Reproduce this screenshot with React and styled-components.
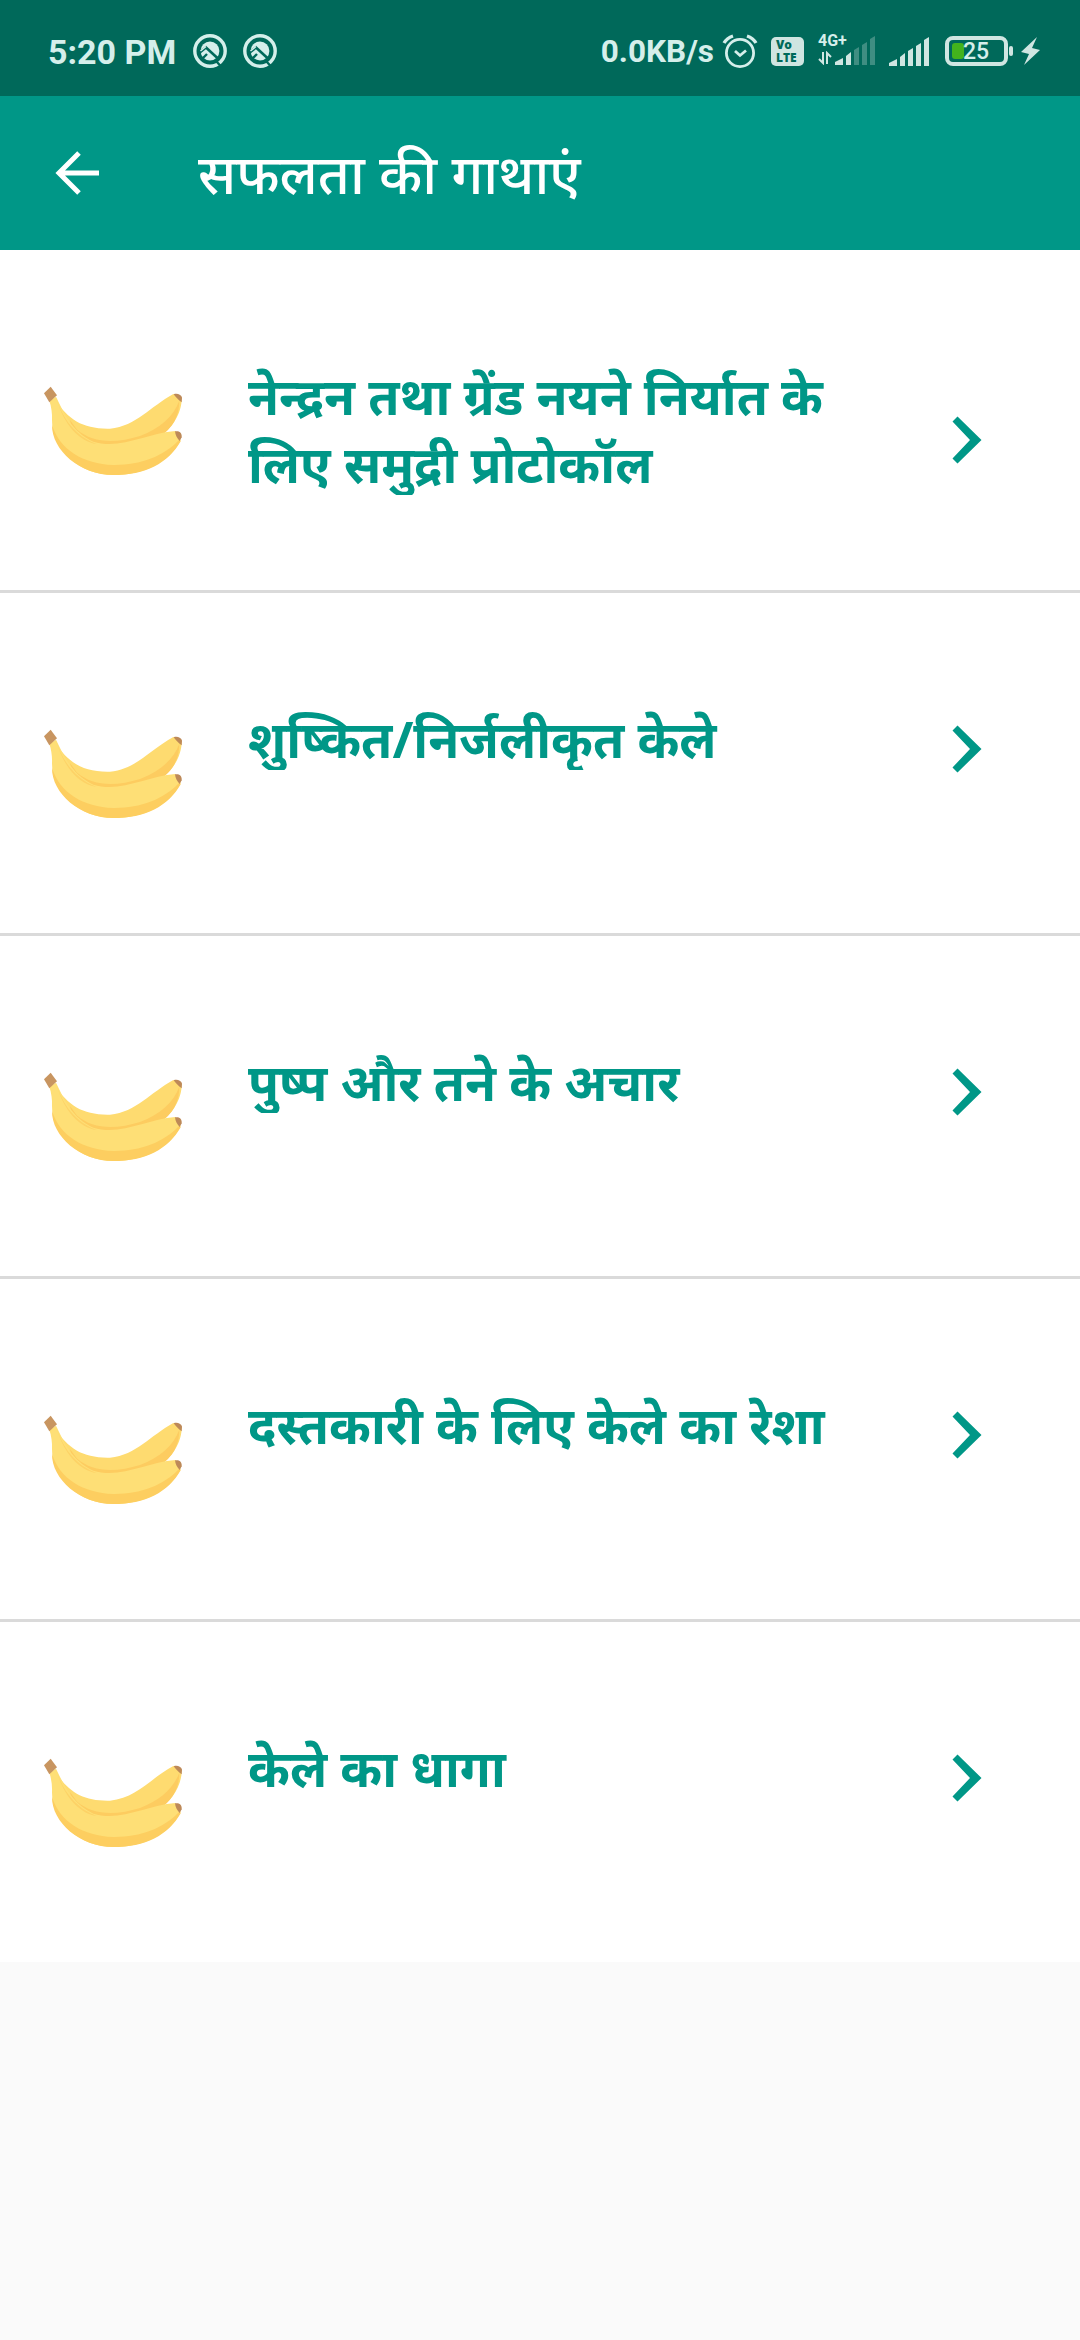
import styled, { createGlobalStyle } from "styled-components";

const GlobalStyle = createGlobalStyle`
  * {
    box-sizing: border-box;
  }

  body {
    margin: 0;
    background: #fafafa;
    font-family: "Noto Sans", "Noto Sans Devanagari", sans-serif;
  }
`;

const Screen = styled.div`
  width: 1080px;
  min-height: 2340px;
  display: flex;
  flex-direction: column;
  background: #fafafa;
`;

// Android status bar
const StatusBar = styled.div`
  height: 96px;
  padding: 6px 40px 0 48px;
  display: flex;
  align-items: center;
  background: #00695a;
  color: #d5efeb;
  font-family: Roboto, sans-serif;
  font-weight: 700;
`;

const StatusText = styled.span`
  padding-top: 2px;
  font-size: ${(props) => props.$size}px;
  line-height: 40px;
  white-space: nowrap;
`;

const StatusIcon = styled.svg`
  display: block;
  flex: none;
  margin-left: ${(props) => props.$gap}px;
`;

const Spacer = styled.div`
  flex: 1;
`;

const VoLte = styled.div`
  width: 33px;
  height: 29px;
  margin-left: 13px;
  padding: 1px 0 0 5px;
  display: flex;
  flex-direction: column;
  border-radius: 5px;
  background: #cfe5e1;
  color: #00695a;
  font-family: "Open Sans", sans-serif;
  font-size: 12px;
  font-weight: 800;
  line-height: 13px;
`;

const NetworkCell = styled.div`
  position: relative;
  width: 59px;
  height: 30px;
  margin-left: 12px;
  padding: 0 0 1px 2px;
  display: flex;
  align-items: flex-end;
  justify-content: space-between;
`;

const NetworkType = styled.span`
  position: absolute;
  left: 2px;
  top: -3px;
  font-size: 16px;
  line-height: 16px;
`;

const Battery = styled.div`
  position: relative;
  flex: none;
  width: 63px;
  height: 30px;
  margin-left: 16px;
  padding: 3px;
  border: 4px solid #d0e6e2;
  border-radius: 8px;
`;

const BatteryFill = styled.div`
  width: 12px;
  height: 16px;
  border-radius: 3px;
  background: #43b31d;
`;

const BatteryLevel = styled.span`
  position: absolute;
  left: 14px;
  top: 0;
  font-size: 23px;
  font-weight: 500;
  line-height: 23px;
`;

// Toolbar
const AppBar = styled.header`
  height: 154px;
  padding-left: 55px;
  display: flex;
  align-items: center;
  background: #009787;
`;

const BackButton = styled.button`
  width: 44px;
  height: 44px;
  padding: 0;
  border: 0;
  background: none;
`;

const Title = styled.h1`
  margin: 0 0 0 99px;
  color: #fff;
  font-size: 55px;
  font-weight: 500;
  line-height: 76px;
  white-space: nowrap;
`;

// List
const List = styled.ul`
  margin: 0;
  padding: 0;
  list-style: none;
  background: #fff;
`;

const Row = styled.li`
  height: 340px;
  display: flex;
  align-items: flex-start;

  & + & {
    height: 343px;
    border-top: 3px solid #dadada;
  }
`;

const Thumb = styled.svg`
  flex: none;
  width: 170px;
  height: 120px;
  margin: 120px 0 0 30px;
`;

// low vowel signs are cut at the bottom of the text box
const Label = styled.div`
  width: 620px;
  margin: 112px 0 0 48px;
  color: #009787;
  font-size: 50.5px;
  font-weight: 700;
  line-height: 68px;
  white-space: pre-line;
  clip-path: inset(-20px 0 3px 0);
`;

const Chevron = styled.svg`
  flex: none;
  width: 30px;
  height: 48px;
  margin: ${(props) => props.$top}px 0 0 84px;
`;

function QIcon({ gap }) {
  return (
    <StatusIcon $gap={gap} width="34" height="34" viewBox="0 0 34 34">
      <circle cx="17" cy="17" r="15.2" fill="none" stroke="#d5efeb" strokeWidth="3.4" />
      <circle cx="17" cy="17" r="9.4" fill="#d5efeb" />
      <path d="M5.5 19.5 L13 13.5 L26 25.5" fill="none" stroke="#00695a" strokeWidth="2.6" />
      <path d="M7.500 17 L13 12.500" stroke="#d5efeb" strokeWidth="1.500" />
      <path d="M9 25 L14 20" stroke="#00695a" strokeWidth="2.400" />
      <path d="M23.500 27.500 L28.500 33" stroke="#00695a" strokeWidth="2.400" />
    </StatusIcon>
  );
}

const bars = [
  "M0 29 V26 L8 22 V29 Z",
  "M11 29 V20 L16 16 V29 Z",
  "M19 29 V14 L24 11 V29 Z",
  "M27 29 V9 L32 6 V29 Z",
  "M35 29 V3 L40 0 V29 Z",
];

function Signal({ gap, strength }) {
  return (
    <StatusIcon $gap={gap} width="40" height="29" viewBox="0 0 40 29">
      {bars.map((d, index) => (
        <path key={index} d={d} fill="#d0e6e2" opacity={index < strength ? 1 : 0.3} />
      ))}
    </StatusIcon>
  );
}

function Banana() {
  return (
    <Thumb viewBox="0 0 510 360">
      <path d="M75 88 C115 150 160 178 240 176 C320 168 360 110 430 72 L455 84 C456 130 425 180 380 205 C300 245 190 245 120 170 Z" fill="#fedb70" />
      <path d="M448 92 C430 140 390 175 330 198 C260 220 190 222 140 178 L120 150 L130 200 C210 250 330 235 385 203 C430 175 448 135 448 92 Z" fill="#fdcc60" />
      <path d="M58 92 L78 80 C100 125 125 185 190 215 C270 240 350 190 436 183 L452 210 C420 275 345 315 250 315 C150 315 65 240 66 150 C67 130 64 110 58 92 Z" fill="#fedf76" />
      <path d="M66 165 C90 240 160 282 250 285 C330 286 400 260 446 211 L453 212 C415 280 345 315 250 315 C150 315 65 240 66 165 Z" fill="#fdce60" />
      <path d="M78 80 C95 145 140 200 200 222 C150 215 100 165 78 80 Z" fill="#fdd266" />
      <path d="M42 70 L62 50 L81 76 L58 97 Z" fill="#c89560" />
      <path d="M431 73 C442 69 452 74 456 82 L455 97 C445 90 438 82 431 73 Z" fill="#bd8958" />
      <path d="M435 184 C450 181 456 190 455 202 L449 213 C441 205 436 195 435 184 Z" fill="#bd8958" />
    </Thumb>
  );
}

const stories = [
  { title: "नेन्द्रन तथा ग्रेंड नयने निर्यात के\nलिए समुद्री प्रोटोकॉल", arrowTop: 166 },
  { title: "शुष्कित/निर्जलीकृत केले", arrowTop: 132 },
  { title: "पुष्प और तने के अचार", arrowTop: 132 },
  { title: "दस्तकारी के लिए केले का रेशा", arrowTop: 132 },
  { title: "केले का धागा", arrowTop: 132 },
];

function App() {
  return (
    <Screen>
      <GlobalStyle />
      <StatusBar>
        <StatusText $size={34}>5:20 PM</StatusText>
        <QIcon gap={17} />
        <QIcon gap={16} />
        <Spacer />
        <StatusText $size={31.5}>0.0KB/s</StatusText>
        <StatusIcon $gap={8} width="36" height="36" viewBox="0 0 36 36" fill="none" stroke="#d5efeb">
          <circle cx="18" cy="20" r="13.600" strokeWidth="2.800" />
          <path d="M13 18 L18 22.500 L24 17.500" strokeWidth="2.800" />
          <path d="M2 10 Q5 5 11 3 M25 3 Q31 5 34 10" strokeWidth="3.400" />
        </StatusIcon>
        <VoLte>
          <span>Vo</span>
          <span>LTE</span>
        </VoLte>
        <NetworkCell>
          <NetworkType>4G+</NetworkType>
          <svg width="14" height="14" viewBox="0 0 14 14" fill="none" stroke="#d0e6e2" strokeWidth="2">
            <path d="M5 1 V12 L1 8 M9 13 V2 L13 6" />
          </svg>
          <Signal gap={2} strength={2} />
        </NetworkCell>
        <Signal gap={14} strength={5} />
        <Battery>
          <BatteryFill />
          <BatteryLevel>25</BatteryLevel>
        </Battery>
        <StatusIcon $gap={1} width="31" height="30" viewBox="0 0 31 30" fill="#d0e6e2">
          <rect x="0" y="10" width="4" height="10" rx="2" />
          <path d="M28 1 L12 16 L20 18 L15 29 L31 14 L23 12 Z" />
        </StatusIcon>
      </StatusBar>

      <AppBar>
        <BackButton aria-label="Back">
          <svg width="44" height="44" viewBox="0 0 44 44" fill="none" stroke="#fff" strokeWidth="5">
            <path d="M44 22 H4 M24 2 L4 22 L24 42" />
          </svg>
        </BackButton>
        <Title>सफलता की गाथाएं</Title>
      </AppBar>

      <List>
        {stories.map((story) => (
          <Row key={story.title}>
            <Banana />
            <Label>{story.title}</Label>
            <Chevron $top={story.arrowTop} viewBox="0 0 30 48">
              <path d="M0.500 5.500 L5.500 0.500 L29.500 24 L5.500 47.500 L0.500 42.500 L18 24 Z" fill="#009787" />
            </Chevron>
          </Row>
        ))}
      </List>
    </Screen>
  );
}

export default App;
